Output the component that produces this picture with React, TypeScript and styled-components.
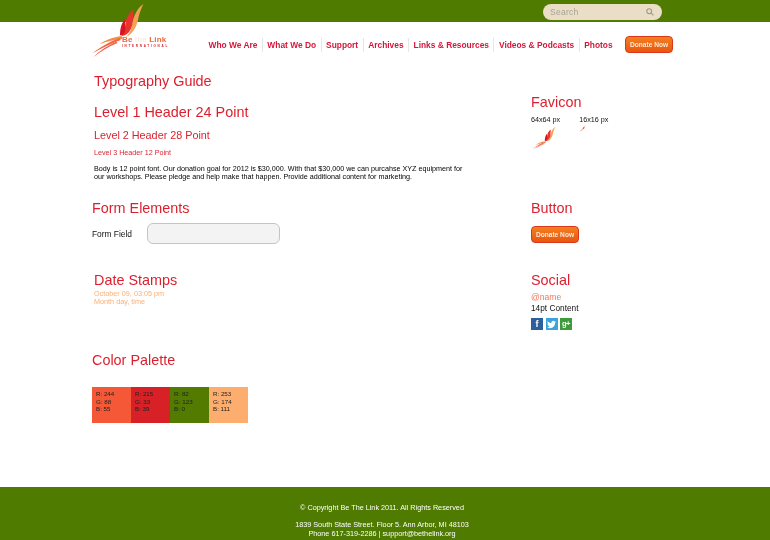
import React from "react";
import styled, { createGlobalStyle } from "styled-components";
import { FaTwitter } from "react-icons/fa";

const Global = createGlobalStyle`
  html, body { margin: 0; padding: 0; background: #fff; }
  body { font-family: "Liberation Sans", Arial, sans-serif; }
`;
const Page = styled.div`
  width: 770px; height: 540px; display: flex; flex-direction: column; overflow: hidden; will-change: transform;
`;
const TopBar = styled.div`
  height: 22px; flex: none; background: #4f7b00; display: flex; justify-content: flex-end; align-items: center; padding: 0 108px 0 0; box-sizing: border-box;
`;
const SearchBox = styled.div`
  width: 119px; height: 16px; margin-top: 2px; border-radius: 8px; background: #eadfc6; display: flex; align-items: center; justify-content: space-between; padding: 0 8px 0 7px; box-sizing: border-box;
  color: #a8a294; font-size: 8.6px; letter-spacing: .2px;
`;
const Header = styled.header`
  height: 43px; flex: none; position: relative; display: flex; align-items: flex-start; padding-left: 92px;
`;
const LogoMark = styled.div`
  position: absolute; left: 90px; top: -22px;
`;
const LogoWord = styled.div`
  position: absolute; left: 122px; top: 14px; font-size: 8px; line-height: 8px; font-weight: bold; color: #f0663f; letter-spacing: .2px; white-space: nowrap;
`;
const Faint = styled.span`
  color: #fbe3d9; font-weight: normal;
`;
const LogoSub = styled.div`
  font-size: 3px; line-height: 4px; letter-spacing: 1.75px; color: #d72127;
`;
const Nav = styled.nav`
  display: flex; align-items: center; margin: 16px 0 0 112px; height: 14px;
`;
const NavItem = styled.a<{ $last?: boolean }>`
  font-size: 8.4px; font-weight: bold; color: #d5173a; white-space: nowrap; padding: 0 4.5px;
  border-right: ${p => (p.$last ? "none" : "1px solid #e6e6e6")}; line-height: 14px;
`;
const DonateButton = styled.button<{ $nav?: boolean }>`
  display: block; flex: none; width: 48px; height: 17px; padding: 0; border: 1px solid #d9361a; border-radius: 4px; box-sizing: border-box;
  background: linear-gradient(#f4801f, #e8560f); color: #fbe8d8; font: bold 6.6px "Liberation Sans", Arial, sans-serif; white-space: nowrap;
  margin-left: ${p => (p.$nav ? "8px" : "0")}; margin-top: ${p => (p.$nav ? "14px" : "0")};
`;
const Main = styled.main`
  flex: 1; display: grid; grid-template-columns: 439px 140px; grid-template-rows: 125px 68px 81px 1fr; padding-left: 92px;
`;
const Section = styled.section<{ $inset?: number; $top?: number }>`
  padding-left: ${p => p.$inset ?? 0}px; padding-top: ${p => p.$top ?? 0}px;
`;
const Title = styled.h2<{ $mt?: number; $mb?: number }>`
  margin: ${p => p.$mt ?? 0}px 0 ${p => p.$mb ?? 0}px; font-size: 14.4px; line-height: 18px; font-weight: normal; color: #dc1f2e; white-space: nowrap;
`;
const Level2 = styled.h3`
  margin: 7px 0 0; font-size: 10.8px; line-height: 14px; font-weight: normal; color: #dc1f2e;
`;
const Level3 = styled.h4`
  margin: 6px 0 0; font-size: 7.2px; line-height: 10px; font-weight: normal; color: #dc1f2e;
`;
const BodyText = styled.p`
  margin: 6.5px 0 0; width: 375px; font-size: 7.2px; line-height: 8.5px; color: #000;
`;
const FieldRow = styled.div`
  display: flex; align-items: center; margin-top: 6px;
`;
const FieldLabel = styled.label`
  width: 55px; font-size: 8.4px; color: #111;
`;
const Input = styled.div`
  width: 133px; height: 21px; box-sizing: border-box; border: 1.5px solid #c4c4c4; border-radius: 6px; background: #f3f3f3;
`;
const Dates = styled.div`
  margin-top: 1px;
`;
const Faded = styled.div`
  font-size: 7.25px; line-height: 8px; color: #fdae6f;
`;
const FaviconRow = styled.div`
  display: flex; gap: 19px; margin-top: 4px;
`;
const FaviconCol = styled.div`
  font-size: 7.2px; line-height: 10px; color: #111; white-space: nowrap;
`;
const Handle = styled.div`
  font-size: 8.6px; line-height: 11px; color: #f4785a; margin-top: 2.5px;
`;
const SocialText = styled.div`
  font-size: 8.3px; line-height: 11px; color: #111;
`;
const Icons = styled.div`
  display: flex; gap: 2.5px; margin-top: 4.5px;
`;
const SocialIcon = styled.div<{ $bg: string }>`
  width: 12px; height: 12px; background: ${p => p.$bg}; color: #fff; font: bold 9px/12px "Liberation Sans", sans-serif; text-align: center; overflow: hidden; display: flex; align-items: center; justify-content: center;
`;
const GPlus = styled.span`
  font-size: 7.5px; letter-spacing: -0.5px;
`;
const Palette = styled.div`
  display: flex; margin-top: 18px; width: 156px;
`;
const Swatch = styled.div<{ $bg: string }>`
  flex: 1; height: 36px; background: ${p => p.$bg}; box-sizing: border-box; padding: 3px 0 0 4px; font-size: 6.2px; line-height: 7.5px; color: #222;
`;
const Footer = styled.footer`
  height: 53px; flex: none; background: #4f7b00; color: #fff; font-size: 7.25px; line-height: 9px; text-align: center; box-sizing: border-box; padding: 15.5px 6px 0 0;
`;
const FooterGap = styled.div`
  height: 8px;
`;

const Bird = ({ w, h }: { w: number; h: number }) => (
  <svg width={w} height={h} viewBox="30 0 170 180" style={{ display: "block" }}>
    <path d="M190 12 C175 22 160 45 155 80 C152 95 145 105 135 112 C165 100 172 70 176 50 C180 35 185 22 190 12Z" fill="#f6a055" />
    <path d="M160 30 C146 38 138 55 136 75 C134 90 130 100 125 108 C147 106 156 85 158 65 C159 50 160 40 160 30Z" fill="#e6352c" />
    <path d="M135 58 C125 68 120 85 120 105 C126 110 134 100 136 90Z" fill="#d7141f" />
    <path d="M125 108 C100 112 75 120 58 133 C78 125 100 120 128 116Z" fill="#f58a4a" />
    <path d="M120 115 C95 122 65 138 38 160 C65 145 95 130 122 120Z" fill="#f0683c" />
    <path d="M110 125 C85 135 58 152 40 172 C60 155 85 140 112 129Z" fill="#f25a48" />
  </svg>
);

export default function App() {
  const nav = ["Who We Are", "What We Do", "Support", "Archives", "Links & Resources", "Videos & Podcasts", "Photos"];
  const swatches = [
    ["#f45837", 244, 88, 55],
    ["#d72127", 215, 33, 39],
    ["#527b00", 82, 123, 0],
    ["#fdae6f", 253, 174, 111],
  ] as const;
  return (
    <Page>
      <Global />
      <TopBar>
        <SearchBox>
          <span>Search</span>
          <svg width="8" height="8" viewBox="0 0 10 10" fill="none" stroke="#a09a8c" strokeWidth="1.4">
            <circle cx="4" cy="4" r="3" />
            <path d="M6.2 6.2 9.3 9.3" />
          </svg>
        </SearchBox>
      </TopBar>
      <Header>
        <LogoMark><Bird w={56.67} h={60} /></LogoMark>
        <LogoWord>
          Be <Faint>the</Faint> Link
          <LogoSub>INTERNATIONAL</LogoSub>
        </LogoWord>
        <Nav>
          {nav.map((n, i) => <NavItem key={n} $last={i === nav.length - 1}>{n}</NavItem>)}
        </Nav>
        <DonateButton $nav>Donate Now</DonateButton>
      </Header>
      <Main>
        <Section $inset={2} $top={7}>
          <Title>Typography Guide</Title>
          <Title $mt={13}>Level 1 Header 24 Point</Title>
          <Level2>Level 2 Header 28 Point</Level2>
          <Level3>Level 3 Header 12 Point</Level3>
          <BodyText>Body is 12 point font. Our donation goal for 2012 is $30,000. With that $30,000 we can purcahse XYZ equipment for our workshops. Please pledge and help make that happen. Provide additional content for marketing.</BodyText>
        </Section>
        <Section $top={28}>
          <Title>Favicon</Title>
          <FaviconRow>
            <FaviconCol>64x64 px<Bird w={26} h={27} /></FaviconCol>
            <FaviconCol>16x16 px<Bird w={7} h={7} /></FaviconCol>
          </FaviconRow>
        </Section>
        <Section $top={9}>
          <Title>Form Elements</Title>
          <FieldRow>
            <FieldLabel>Form Field</FieldLabel>
            <Input />
          </FieldRow>
        </Section>
        <Section $top={9}>
          <Title $mb={9}>Button</Title>
          <DonateButton>Donate Now</DonateButton>
        </Section>
        <Section $inset={2} $top={13}>
          <Title>Date Stamps</Title>
          <Dates>
            <Faded>October 09, 03:05 pm</Faded>
            <Faded>Month day, time</Faded>
          </Dates>
        </Section>
        <Section $top={13}>
          <Title>Social</Title>
          <Handle>@name</Handle>
          <SocialText>14pt Content</SocialText>
          <Icons>
            <SocialIcon $bg="#2d5f9e">f</SocialIcon>
            <SocialIcon $bg="#3ba4dc"><FaTwitter size={9} /></SocialIcon>
            <SocialIcon $bg="#3f9a3c"><GPlus>g+</GPlus></SocialIcon>
          </Icons>
        </Section>
        <Section $top={12}>
          <Title>Color Palette</Title>
          <Palette>
            {swatches.map(([c, r, g, b]) => (
              <Swatch key={c} $bg={c}>R: {r}<br />G: {g}<br />B: {b}</Swatch>
            ))}
          </Palette>
        </Section>
      </Main>
      <Footer>
        © Copyright Be The Link 2011. All Rights Reserved
        <FooterGap />
        1839 South State Street. Floor 5. Ann Arbor, MI 48103<br />
        Phone 617-319-2286 | support@bethelink.org
      </Footer>
    </Page>
  );
}
